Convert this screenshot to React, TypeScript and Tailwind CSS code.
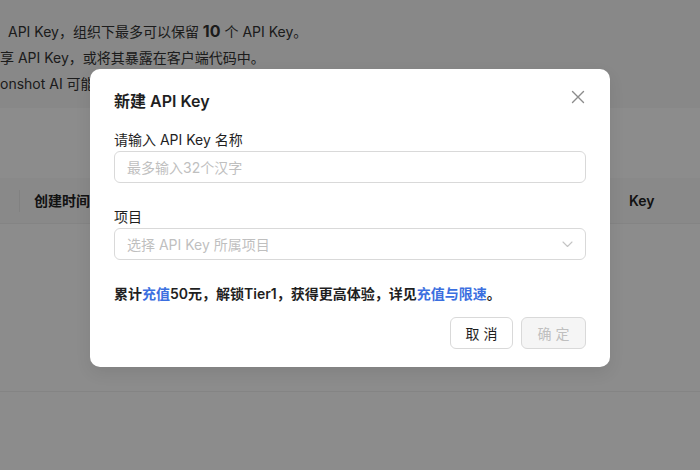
import React from 'react';

const font = "font-['Inter','Noto_Sans_CJK_SC',sans-serif]";

const CloseIcon = () => (
  <svg width="14" height="14" viewBox="0 0 14 14" fill="none">
    <path d="M1.5 1.5L12.5 12.5M12.5 1.5L1.5 12.5" stroke="#8c8c8c" strokeWidth="1.4" strokeLinecap="round" />
  </svg>
);

const Chevron = () => (
  <svg width="11" height="7" viewBox="0 0 11 7" fill="none">
    <path d="M1 1L5.5 5.5L10 1" stroke="#c4c4c4" strokeWidth="1.1" strokeLinecap="round" strokeLinejoin="round" />
  </svg>
);

const Background: React.FC = () => (
  <div className="flex flex-col bg-white h-[470px] overflow-hidden">
    {/* notice block */}
    <div className="bg-[#f7f7f7] h-[108px] pt-[18px] text-[14px] leading-[26px] text-[#333] whitespace-nowrap">
      <p className="pl-[8px]">
        API Key，组织下最多可以保留 <span className="font-bold text-[16px]">10</span> 个 API Key。
      </p>
      <p>享 API Key，或将其暴露在客户端代码中。</p>
      <p>onshot AI 可能</p>
    </div>

    {/* table */}
    <div className="mt-[70px] flex flex-col">
      <div className="h-[46px] bg-[#fafafa] border-b border-[#f0f0f0] flex items-center text-[14px] font-semibold text-[#222]">
        <div className="w-[20px] h-[22px] border-r border-[#ececec]" />
        <div className="pl-[14px] w-[609px]">创建时间</div>
        <div>Key</div>
      </div>
      <div className="h-[168px] border-b border-[#f0f0f0]" />
    </div>
  </div>
);

const Modal: React.FC = () => (
  <div className="w-[520px] bg-white rounded-[10px] pt-[20px] pb-[18px] px-[24px] shadow-[0_6px_16px_rgba(0,0,0,0.08)]">
    <div className="flex items-center justify-between h-[24px]">
      <h2 className="text-[16px] font-semibold text-[#1f1f1f]">新建 API Key</h2>
      <button className="mr-[-3px] -mt-[8px] w-[22px] h-[22px] flex items-center justify-center">
        <CloseIcon />
      </button>
    </div>

    <div className="mt-[16px]">
      <label className="block text-[14px] leading-[22px] text-[#1f1f1f]">请输入 API Key 名称</label>
      <input
        className="w-full h-[32px] rounded-[6px] border border-[#d9d9d9] px-[12px] text-[14px] outline-none placeholder:text-[#bfbfbf]"
        placeholder="最多输入32个汉字"
      />
    </div>

    <div className="mt-[23px]">
      <label className="block text-[14px] leading-[22px] text-[#1f1f1f]">项目</label>
      <div className="w-full h-[32px] rounded-[6px] border border-[#d9d9d9] pl-[12px] pr-[12px] flex items-center justify-between">
        <span className="text-[14px] text-[#bfbfbf]">选择 API Key 所属项目</span>
        <Chevron />
      </div>
    </div>

    <p className="mt-[23px] text-[14px] leading-[22px] font-semibold text-[#1f1f1f]">
      累计<span className="text-[#3b6fe0]">充值</span>50元，解锁Tier1，获得更高体验，详见
      <span className="text-[#3b6fe0]">充值与限速</span>。
    </p>

    <div className="mt-[12px] flex justify-end gap-[8px]">
      <button className="h-[32px] w-[63px] rounded-[6px] border border-[#d9d9d9] bg-white text-[14px] text-[#1f1f1f]">
        取 消
      </button>
      <button className="h-[32px] w-[65px] rounded-[6px] border border-[#d9d9d9] bg-[#f5f5f5] text-[14px] text-[#bfbfbf]">
        确 定
      </button>
    </div>
  </div>
);

export default function App() {
  return (
    <div className={`relative w-[700px] h-[470px] overflow-hidden ${font}`}>
      <Background />
      <div className="absolute inset-0 bg-black/45" />
      <div className="absolute inset-0 flex items-start justify-center pt-[69px]">
        <Modal />
      </div>
    </div>
  );
}
